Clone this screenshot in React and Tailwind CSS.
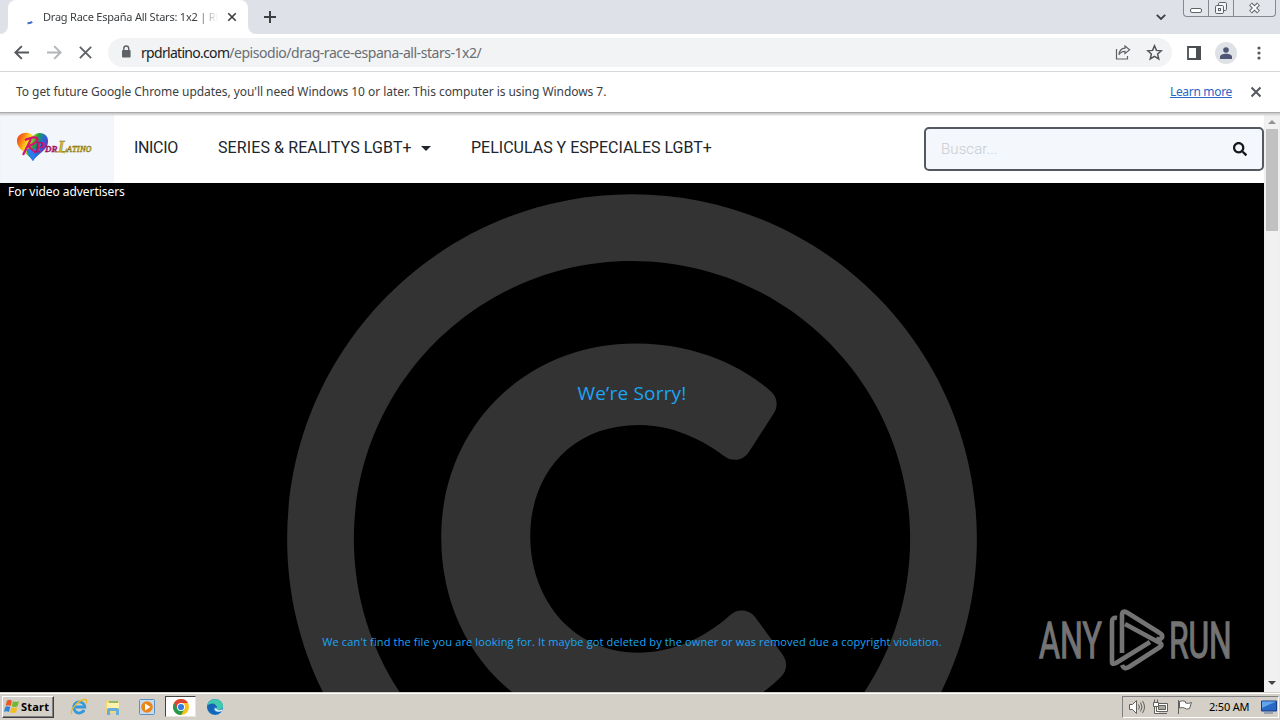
import { FaRegCopyright, FaSearch } from 'react-icons/fa'

const TAHOMA = "font-['Noto_Sans',sans-serif]"

export default function App() {
  return (
    <div className="w-[1280px] h-[720px] flex flex-col overflow-hidden bg-white">
      <TabStrip />
      <Toolbar />
      <InfoBar />
      <div className="flex h-[579px]">
        <main className="w-[1264px] flex flex-col">
          <SiteHeader />
          <Player />
        </main>
        <Scrollbar />
      </div>
      <Taskbar />
    </div>
  )
}

function Cross({ className, width = 2 }) {
  return (
    <svg viewBox="0 0 12 12" className={className} stroke="currentColor" strokeWidth={width} fill="none">
      <path d="M1.5 1.5l9 9M10.5 1.5l-9 9" />
    </svg>
  )
}

function TabStrip() {
  return (
    <div className="h-[34px] shrink-0 flex bg-[#dee1e8]">
      <div className="w-2 bg-white">
        <div className="h-full bg-[#dee1e8] rounded-br-lg" />
      </div>
      <div className="w-[240px] flex items-center bg-white rounded-t-lg pl-[18px]">
        <svg viewBox="0 0 16 16" className="size-4 shrink-0" fill="none" stroke="#3f6fd0" strokeWidth="2">
          <path d="M1.500 14.300q2.300 0 4.800-1.500" />
        </svg>
        <div className={`w-[175px] ml-px overflow-hidden whitespace-nowrap text-[11px] tracking-[-0.22px] text-[#3c4043] ${TAHOMA} mask-r-from-88%`}>
          Drag Race España All Stars: 1x2 | RP
        </div>
        <Cross className="size-[10px] ml-[9px] text-[#3c4043] shrink-0" />
      </div>
      <div className="w-[9px] bg-white">
        <div className="h-full bg-[#dee1e8] rounded-bl-lg" />
      </div>
      <svg viewBox="0 0 12 12" className="size-3 mt-[11px] ml-[7px]" stroke="#3c4043" strokeWidth="2">
        <path d="M6 0v12M0 6h12" />
      </svg>
      <svg viewBox="0 0 10 6" className="w-[10px] h-[6px] mt-[14px] ml-auto" fill="none" stroke="#3c4043" strokeWidth="1.8">
        <path d="M.8 .8L5 5 9.2.8" />
      </svg>
      <div className="flex w-[93px] h-[17px] ml-[17px] mr-1 rounded-b-[4px] border border-t-0 border-[#85888f] bg-[#e2e5ea]">
        <div className="w-[25px] flex justify-center items-end pb-[3px] border-r border-[#85888f]">
          <div className="w-3 h-[5px] rounded-[2px] border border-[#5f6368] bg-white" />
        </div>
        <div className="w-[25px] flex justify-center border-r border-[#85888f]">
          <svg viewBox="0 0 14 14" className="size-[14px] mt-px" fill="#f4f5f7" stroke="#5f6368">
            <rect x="4.5" y="1.5" width="8" height="8" rx="1.2" />
            <rect x="1.5" y="4.5" width="8" height="8" rx="1.2" />
            <rect x="4.5" y="7.5" width="2" height="2" />
          </svg>
        </div>
        <div className="flex-1 flex justify-center">
          <svg viewBox="0 0 13 12" className="w-[13px] h-3 mt-0.5" fill="none">
            <path d="M2.5 2l8 8M10.5 2l-8 8" stroke="#5f6368" strokeWidth="4" />
            <path d="M3 2.5l7 7M10 2.5l-7 7" stroke="#fff" strokeWidth="2" />
          </svg>
        </div>
      </div>
    </div>
  )
}

function Toolbar() {
  return (
    <div className="h-[38px] shrink-0 flex items-center border-b border-[#d5d7da] bg-white text-[#5f6368]">
      <svg viewBox="0 0 14 14" className="size-[15px] ml-[14px]" fill="none" stroke="#55585c" strokeWidth="1.8">
        <path d="M14 7H1.5M7.3 1L1.3 7l6 6" />
      </svg>
      <svg viewBox="0 0 14 14" className="size-[15px] ml-[18px]" fill="none" stroke="#b3b5b8" strokeWidth="1.8">
        <path d="M0 7h12.5M6.7 1l6 6-6 6" />
      </svg>
      <Cross className="size-[15px] ml-[16px] text-[#5f6368]" width={1.5} />
      <div className="w-[1064px] h-[29px] ml-[15px] flex items-center rounded-full bg-[#f1f3f4]">
        <svg viewBox="0 0 10 13" className="w-[10px] h-[13px] ml-[13px] mb-0.5" fill="none">
          <rect x="1" y="5" width="8.6" height="7.5" rx="1" fill="#5f6368" />
          <path d="M2.8 5.5V3.4a2.4 2.4 0 0 1 4.9 0v2.1" stroke="#5f6368" strokeWidth="1.4" />
        </svg>
        <div className={`ml-[10px] text-sm tracking-[-0.46px] whitespace-nowrap text-[#6a6e73] ${TAHOMA}`}>
          <span className="text-[#202124] tracking-[-0.7px]">rpdrlatino.com</span>/episodio/drag-race-espana-all-stars-1x2/
        </div>
        <svg viewBox="0 0 16 15" className="w-4 h-[15px] ml-auto" fill="none" stroke="#5f6368" strokeWidth="1.2">
          <path d="M1.5 4v10h11v-3M10 1l4.6 3.8L10 8.6V6.3C7 6.3 5.2 7.3 4 9.8 4.3 6 6.200 3.500 10 3.200z" />
        </svg>
        <svg viewBox="0 0 24 24" className="size-[17px] ml-[15px] mr-[9px]" fill="none" stroke="#505357" strokeWidth="2.1">
          <path d="M12 2.500l2.700 6.500 7 .6-5.300 4.600 1.600 6.800-6-3.600-6 3.600 1.600-6.800L2.300 9.600l7-.6z" />
        </svg>
      </div>
      <svg viewBox="0 0 14 14" className="size-[14px] ml-[15px]">
        <path d="M1 1h12v12H1z" fill="none" stroke="#4b4e52" strokeWidth="1.8" />
        <path d="M9 0h5v14H9z" fill="#4b4e52" />
      </svg>
      <div className="size-[22px] ml-[14px] flex items-center justify-center rounded-full bg-[#dee1e6]">
        <svg viewBox="0 0 12 12" className="size-3" fill="#4d5775">
          <circle cx="6" cy="3" r="2.800" />
          <path d="M0 12v-2c0-2 3-3.200 6-3.200s6 1.200 6 3.200v2z" />
        </svg>
      </div>
      <svg viewBox="0 0 4 14" className="w-1 h-[14px] ml-[20px]" fill="#55585c">
        <circle cx="2" cy="2" r="1.600" />
        <circle cx="2" cy="7" r="1.600" />
        <circle cx="2" cy="12" r="1.600" />
      </svg>
    </div>
  )
}

function InfoBar() {
  return (
    <div className={`h-[41px] shrink-0 flex items-center pl-4 border-b border-[#aaa] bg-white text-xs text-[#3c4043] ${TAHOMA}`}>
      <span className="tracking-[-0.05px]">
        To get future Google Chrome updates, you'll need Windows 10 or later. This computer is using Windows 7.
      </span>
      <span className="ml-auto tracking-[-0.32px] text-[#2a66c4] underline">Learn more</span>
      <Cross className="size-3 ml-[18px] mr-[18px] text-[#55585c]" />
    </div>
  )
}

function SiteLogo() {
  return (
    <svg viewBox="0 0 76 30" className="w-[76px] h-[30px]">
      <defs>
        <linearGradient id="rainbow" x1="0" y1="0" x2="1" y2="0.4">
          <stop offset="0" stopColor="#f02818" />
          <stop offset="0.25" stopColor="#fb8a14" />
          <stop offset="0.42" stopColor="#fbe31e" />
          <stop offset="0.62" stopColor="#1ca43c" />
          <stop offset="0.82" stopColor="#2467dc" />
          <stop offset="1" stopColor="#7a32a8" />
        </linearGradient>
      </defs>
      <path d="M16 29C12 22 0 18 0 9 0 1 11-2 16 4c5-6 16-3 15 6 0 8-11 12-15 19z" fill="url(#rainbow)" />
      <path d="M9 17l12 0-5 12C13 25 10 21 9 17z" fill="#267cf0" />
      <path d="M8 8q9-4 12-2 2 4-8 8M14 7L6 23M11 14l8 7" fill="none" stroke="#d81273" strokeWidth="2.200" />
      <text className="font-['Liberation_Serif',serif] italic font-bold" strokeWidth=".4">
        <tspan x="18" y="20" fontSize="15" fill="#d81273" stroke="#8d1455">P</tspan>
        <tspan x="28" y="20" fontSize="9" fill="#b41c72" stroke="#8d1455">DR</tspan>
        <tspan x="41" y="20" fontSize="16" fill="#d4bb25" stroke="#796c22">L</tspan>
        <tspan x="50" y="20" fontSize="8" fill="#d4bb25" stroke="#796c22">ATINO</tspan>
      </text>
      <path d="M38 20q6-1 10 1" fill="none" stroke="#c5ad27" />
    </svg>
  )
}

function SiteHeader() {
  return (
    <header className="h-[70px] shrink-0 flex items-center bg-white text-base text-[#20252b] font-['Roboto',sans-serif] shadow-[inset_0_3px_2px_-1px_#ccc]">
      <div className="w-[114px] h-full pl-[17px] pt-[19px] bg-[#f3f6fb] shadow-[inset_0_3px_2px_-1px_#ccc]">
        <SiteLogo />
      </div>
      <nav className="flex items-center ml-5 whitespace-nowrap">
        <a className="w-11 tracking-[-0.35px]">INICIO</a>
        <a className="flex items-center ml-[40px]">
          <span className="w-[194px] tracking-[0.1px]">SERIES &amp; REALITYS LGBT+</span>
          <svg viewBox="0 0 10 5" className="w-[10px] h-[5px] ml-[9px]" fill="#20252b">
            <path d="M0 0h10L5 5z" />
          </svg>
        </a>
        <a className="ml-[40px]">PELICULAS Y ESPECIALES LGBT+</a>
      </nav>
      <div className="w-[340px] h-11 mt-0.5 ml-auto flex items-center justify-between pl-[15px] pr-[15px] rounded-[5px] border-2 border-[#54595f] bg-[#f4f7fc]">
        <span className="text-[15px] font-light tracking-[0.1px] text-[#c8ccd1]">Buscar...</span>
        <FaSearch className="size-[14px] text-[#14171b]" />
      </div>
    </header>
  )
}

function Player() {
  return (
    <section className="relative h-[509px] overflow-hidden bg-black text-[#1ba5f5] font-['Open_Sans',sans-serif]">
      <FaRegCopyright className="absolute left-[276px] top-0 size-[712px] text-[#333]" />
      <div className="relative h-full flex flex-col items-center">
        <div className="self-start pl-2 pt-px text-xs leading-4 tracking-[-0.05px] text-white font-['Noto_Sans',sans-serif]">
          For video advertisers
        </div>
        <h1 className="mt-[179px] text-[19px] leading-7 font-medium tracking-[0.2px]">We’re Sorry!</h1>
        <p className="mt-[227px] text-[11px] leading-4 tracking-[0.143px] whitespace-nowrap">
          We can't find the file you are looking for. It maybe got deleted by the owner or was removed due a copyright violation.
        </p>
      </div>
      <Watermark />
    </section>
  )
}

function Watermark() {
  return (
    <svg viewBox="0 0 194 62" className="absolute left-[1038px] top-[426px] w-[194px] h-[62px]" fill="#747474">
      <g className="font-['Roboto',sans-serif]" fontSize="50" stroke="#747474" strokeWidth="1.300">
        <text transform="translate(1 49) scale(.64 1)" textLength="98" lengthAdjust="spacingAndGlyphs">ANY</text>
        <text transform="translate(131 49) scale(.64 1)" textLength="98" lengthAdjust="spacingAndGlyphs">RUN</text>
      </g>
      <g fill="none" stroke="#747474" strokeWidth="4.600" strokeLinejoin="round">
        <path d="M79 9q-5-1-5 4v40q0 3 4 1l34-21" />
        <path d="M84 44V6q0-5 5-2.500l32 20q4 2 3 5-2 3-6 1" />
        <path d="M87 15l35 19q3 2 0 4L91 58q-5 3-7-2" />
      </g>
    </svg>
  )
}

function Scrollbar() {
  return (
    <div className="w-4 flex flex-col items-center bg-[#f1f1f1] shadow-[inset_0_3px_2px_-1px_#ccc]">
      <svg viewBox="0 0 8 4" className="w-2 h-1 mt-[7px]" fill="#929292">
        <path d="M0 4l4-4 4 4z" />
      </svg>
      <div className="w-3 h-[102px] mt-[5px] bg-[#c1c1c1]" />
      <svg viewBox="0 0 8 4" className="w-2 h-1 mt-auto mb-[7px]" fill="#444">
        <path d="M0 0h8L4 4z" />
      </svg>
    </div>
  )
}

function Taskbar() {
  return (
    <footer className={`h-7 shrink-0 flex items-center border-t border-[#d4d0c8] bg-[#d4d0c8] text-black shadow-[inset_0_1px_0_#fff] ${TAHOMA}`}>
      <div className="w-[52px] h-[22px] ml-0.5 flex items-center pl-px bg-[#d4d0c8] border border-t-white border-l-white border-r-[#404040] border-b-[#404040] shadow-[inset_-1px_-1px_0_#808080]">
        <svg viewBox="0 0 16 15" className="w-4 h-[15px] shrink-0">
          <path d="M3 1.500Q5.500 0 8 1.800L6.700 7Q4.500 5.600 1.600 6.700z" fill="#e85a25" />
          <path d="M9 2.200q3 1.300 6 0l-1.400 5.100q-3 1.300-5.800 0z" fill="#76b52f" />
          <path d="M1.300 7.800q2.600-1.200 5 .2L5 13q-2.500-1.500-5-.2z" fill="#3284d8" />
          <path d="M7.500 8.300q3 1.400 5.800 0L12 13.300q-3 1.400-5.900 0z" fill="#f6bc1d" />
        </svg>
        <span className="ml-px mt-px text-[11px] font-bold tracking-[0.2px]">Start</span>
      </div>
      <svg viewBox="0 0 18 18" className="size-[18px] ml-[16px]" fill="none">
        <path d="M14.200 12A5.600 5.600 0 1 1 14.800 9H5" stroke="#3498dc" strokeWidth="2.800" />
        <path d="M2 16C-1 13 8 2 15 1.500q3 0 1 4" stroke="#e8b92c" strokeWidth="1.300" />
      </svg>
      <svg viewBox="0 0 18 18" className="size-[18px] ml-[16px]">
        <path d="M2 3l4-1 1 2h8v11H2z" fill="#f3d77b" />
        <path d="M3 5h12v5H3z" fill="#fff0ae" />
        <path d="M5 3h9v2H5z" fill="#91bb62" />
        <path d="M3 17v-5q0-2 2-2h8q2 0 2 2v5h-3v-4H6v4z" fill="#66aeda" />
      </svg>
      <svg viewBox="0 0 16 16" className="size-4 ml-[17px]">
        <rect x=".5" y=".5" width="15" height="15" rx="1" fill="#c5dcf0" stroke="#5c91c5" />
        <circle cx="8" cy="8" r="5.800" fill="#ed8417" />
        <path d="M6 4.500v7L11.500 8z" fill="#fff" />
      </svg>
      <div className="w-[31px] h-[21px] ml-[10px] flex items-center justify-center bg-white border border-t-[#404040] border-l-[#404040] border-[#e8e5df]">
        <ChromeIcon />
      </div>
      <svg viewBox="0 0 16 16" className="size-4 ml-[11px]">
        <circle cx="8" cy="8" r="8" fill="#1778c9" />
        <path d="M.5 6C2-1 14-2 16 6c.3 3-2 5-5 5-2 0-2-1-1-2 .5-3-4-5-9.500-3z" fill="#41c8ad" />
        <path d="M.3 7C4 3 9 4 9.500 8 8 7 6 8 6.500 10.500 7 14 12 14 14.500 12A8 8 0 0 1 .3 7z" fill="#1763b5" />
        <path d="M9.500 9c-1 2 3 3 5.800 1.200L15 12c-4 2-8 0-7.500-2.500z" fill="#e9f2f7" />
      </svg>
      <div className="w-[157px] h-[22px] ml-auto mr-px flex items-center pl-[4px] border border-t-[#808080] border-l-[#808080] border-white">
        <TrayIcons />
        <span className="ml-[16px] mt-px text-[11px] tracking-[-0.2px] whitespace-nowrap">2:50 AM</span>
        <svg viewBox="0 0 16 14" className="w-4 h-[14px] ml-auto mr-px">
          <path d="M.5 1h15v10H.5z" fill="#2869c4" stroke="#173c83" />
          <path d="M1 1.500h14L1 8z" fill="#62a5ed" />
          <path d="M3 13h9" stroke="#8092ac" strokeWidth="1.500" />
        </svg>
      </div>
    </footer>
  )
}

function ChromeIcon() {
  return (
    <svg viewBox="0 0 16 16" className="size-4">
      <circle cx="8" cy="8" r="8" fill="#fbc116" />
      <path d="M1.070 4A8 8 0 0 0 8 16l3.500-6L8 8z" fill="#27994b" />
      <path d="M8 4h6.930A8 8 0 0 0 1.070 4l3.500 6z" fill="#dd4435" />
      <circle cx="8" cy="8" r="4" fill="#fff" />
      <circle cx="8" cy="8" r="3.100" fill="#357be2" />
    </svg>
  )
}

function TrayIcons() {
  return (
    <svg viewBox="0 0 66 18" className="w-[66px] h-[18px]" fill="#fff" stroke="#62605c">
      <path d="M2.500 6.500h3l4-4v13l-4-4h-3z" />
      <path d="M11.500 6.500q2 2.500 0 5M13.500 4.500q3 4.500 0 9M15.500 3q4 6 0 12" fill="none" />
      <path d="M29.500 5.500h11v8h-11zM32 15.500h8M27.500 8.500v7h5" />
      <path d="M31.500 7.500h7v4h-7z" fill="#aaa89f" />
      <path d="M26.500 4.500h5v4h-5zM27.500 1.500v3M30.500 1.500v3" />
      <path d="M51.500 2v14" />
      <path d="M52.500 3.500q3-1.500 6 0v1.500q3 1 6-.5l-2 6q-3 1.500-5-.500-2-1-5 0z" />
    </svg>
  )
}
